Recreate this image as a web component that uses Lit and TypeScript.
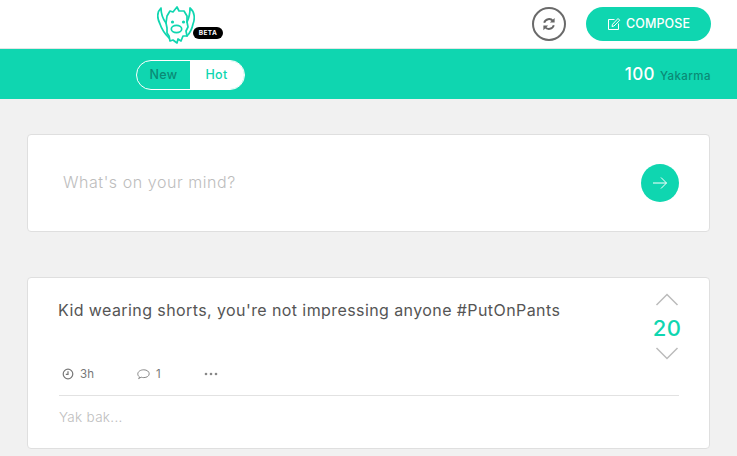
import { LitElement, html, css } from "lit";
import { customElement } from "lit/decorators.js";

@customElement("app-root")
export class AppRoot extends LitElement {
  static styles = css`
    :host { display: block; width: 737px; height: 456px; overflow: hidden; background: #f1f1f1; font-family: Inter, "Liberation Sans", sans-serif; color: #555; }
    .top { height: 48px; background: #fff; border-bottom: 1px solid #e4e4e4; display: flex; align-items: center; padding-left: 157px; padding-right: 26px; }
    .logo { display: block; }
    .beta { margin-left: -2px; margin-top: 17px; width: 30px; height: 12px; border-radius: 6px; background: #000; color: #fff; font-size: 6.5px; font-weight: 700; letter-spacing: .4px; display: flex; align-items: center; justify-content: center; }
    .refresh { margin-left: auto; width: 34px; height: 34px; box-sizing: border-box; border: 2px solid #6a6a6a; border-radius: 50%; display: flex; align-items: center; justify-content: center; margin-right: 20px; }
    .compose { width: 125px; height: 34px; border-radius: 17px; background: #0fd6b0; color: #fff; font-size: 12.5px; font-weight: 500; display: flex; align-items: center; justify-content: center; gap: 5px; letter-spacing: .1px; padding-bottom: 1px; box-sizing: border-box; }
    .bar { height: 50px; background: #0fd6b0; display: flex; align-items: center; padding-left: 136px; padding-right: 26px; }
    .toggle { width: 109px; height: 30px; margin-top: 1px; box-sizing: border-box; border: 1px solid #fff; border-radius: 15px; display: flex; overflow: hidden; font-size: 12.5px; font-weight: 500; letter-spacing: .35px; }
    .toggle span { display: flex; align-items: center; justify-content: center; }
    .new { width: 53px; color: #0a8a75; }
    .hot { flex: 1; background: #fff; color: #0fd6b0; padding-left: 2px; padding-right: 3px; box-sizing: border-box; }
    .karma { margin-left: auto; display: flex; align-items: baseline; gap: 5px; }
    .karma b { font-weight: 500; font-size: 17px; letter-spacing: .4px; color: #fff; }
    .karma span { font-size: 11.5px; font-weight: 500; letter-spacing: .45px; color: #0a8a75; }
    .main { padding: 35px 27px 0; display: flex; flex-direction: column; gap: 45px; }
    .card { background: #fff; border: 1px solid #dfdfdf; border-radius: 4px; }
    .ask { height: 98px; box-sizing: border-box; display: flex; align-items: center; padding: 0 30px 0 35px; }
    .ph { font-size: 16px; letter-spacing: .55px; color: #bdbdbd; font-weight: 300; margin-top: -2px; }
    .go { margin-left: auto; width: 38px; height: 38px; border-radius: 50%; background: #0fd6b0; display: flex; align-items: center; justify-content: center; }
    .post { height: 172px; box-sizing: border-box; padding: 0 30px 0 31px; display: flex; flex-direction: column; }
    .body { height: 117px; display: flex; border-bottom: 1px solid #e2e2e2; }
    .left { flex: 1; display: flex; flex-direction: column; }
    .msg { margin-top: 21px; margin-left: -1px; font-size: 16px; letter-spacing: .41px; line-height: 22px; color: #555; font-weight: 400; white-space: nowrap; }
    .meta { margin-top: auto; margin-bottom: 14px; padding-left: 3px; display: flex; align-items: center; font-size: 11.5px; color: #777; letter-spacing: .2px; }
    .m { display: flex; align-items: center; gap: 6px; }
    .m.time { width: 75px; }
    .m.com { width: 67px; }
    .vote { width: 28px; margin-right: -2px; display: flex; flex-direction: column; align-items: center; padding-top: 15px; }
    .score { font-size: 22px; line-height: 26px; font-weight: 500; color: #0fd6b0; margin: 9px 0 6px; letter-spacing: .3px; }
    .reply { font-size: 13.5px; letter-spacing: .3px; font-weight: 300; color: #bdbdbd; padding-top: 13px; }
    svg { display: block; }
  `;

  render() {
    return html`
      <div class="top">
        <svg class="logo" width="38" height="44" viewBox="0 0 38 44" fill="none" stroke="#0fd6b0" stroke-width="1.7" stroke-linejoin="round" stroke-linecap="round">
          <path d="M4 6 C0 10 0 16 3 22 C5 28 8 32 12 36 M4 6 C4 12 6 17 9 21"/>
          <path d="M33 6 C38 10 38 17 36 22 C35 27 33 31 30 34 M33 6 C33 12 32 16 30 20"/>
          <path d="M9 21 L10 14 L13 9 L16 10 L20 5 L22 9 L27 9 L30 14 L30 20 L31 25 L29 29 L30 34 L26 34 L24 39 L21 37 L20 41 L16 38 L13 39 L12 34 L10 31 L10 26 Z"/>
          <ellipse cx="19.5" cy="27" rx="5.2" ry="3.6"/>
          <circle cx="15.5" cy="20" r="1.6" fill="#0fd6b0" stroke="none"/>
          <circle cx="26.5" cy="20" r="1.6" fill="#0fd6b0" stroke="none"/>
        </svg>
        <div class="beta">BETA</div>
        <div class="refresh">
          <svg width="14" height="14" viewBox="0 0 16 16" fill="none" stroke="#666" stroke-width="2.2">
            <path d="M2.5 6.5 A5.8 5.8 0 0 1 12.6 4.6"/><path d="M14.4 1 V6.4 H9" fill="#666" stroke="none"/>
            <path d="M13.5 9.5 A5.8 5.8 0 0 1 3.4 11.4"/><path d="M1.6 15 V9.6 H7" fill="#666" stroke="none"/>
          </svg>
        </div>
        <div class="compose">
          <svg width="14" height="14" viewBox="0 0 14 14" fill="none" stroke="#fff" stroke-width="1"><path d="M7.5 2.5 H1.5 V12.5 H11.5 V6.5"/><path d="M5 9.5 L5.5 7.3 L11 1.5 L12.7 3.2 L7 9 Z"/></svg>
          COMPOSE
        </div>
      </div>
      <div class="bar">
        <div class="toggle"><span class="new">New</span><span class="hot">Hot</span></div>
        <div class="karma"><b>100</b><span>Yakarma</span></div>
      </div>
      <div class="main">
        <div class="card ask">
          <div class="ph">What's on your mind?</div>
          <div class="go"><svg width="16" height="14" viewBox="0 0 16 14" fill="none" stroke="#fff" stroke-width="1"><path d="M1 7 H14.5 M9 1.5 L14.5 7 L9 12.5"/></svg></div>
        </div>
        <div class="card post">
          <div class="body">
            <div class="left">
              <div class="msg">Kid wearing shorts, you're not impressing anyone #PutOnPants</div>
              <div class="meta">
                <div class="m time"><svg width="12" height="12" viewBox="0 0 12 12" fill="none" stroke="#777" stroke-width="1.2"><circle cx="6" cy="6" r="4.8"/><path d="M6 3.2 V6.3 H3.8"/></svg>3h</div>
                <div class="m com"><svg width="13" height="12" viewBox="0 0 13 12" fill="none" stroke="#888" stroke-width="1"><path d="M2.6 9 C1.3 8.2 .8 7 .8 6 C.8 3.6 3.4 1.8 6.8 1.8 C10 1.8 12.2 3.6 12.2 5.8 C12.2 8 9.8 9.6 6.8 9.6 C5.8 9.6 5 9.5 4.2 9.2 L1.6 10.6 Z"/></svg>1</div>
                <svg width="14" height="4" viewBox="0 0 14 4" fill="#888"><circle cx="2" cy="2" r="1.3"/><circle cx="7" cy="2" r="1.3"/><circle cx="12" cy="2" r="1.3"/></svg>
              </div>
            </div>
            <div class="vote">
              <svg width="24" height="13" viewBox="0 0 24 13" fill="none" stroke="#bbb" stroke-width="1.5"><path d="M1.5 12 L12 1.5 L22.5 12"/></svg>
              <div class="score">20</div>
              <svg width="24" height="13" viewBox="0 0 24 13" fill="none" stroke="#bbb" stroke-width="1.5"><path d="M1.5 1 L12 11.5 L22.5 1"/></svg>
            </div>
          </div>
          <div class="reply">Yak bak...</div>
        </div>
      </div>
    `;
  }
}
